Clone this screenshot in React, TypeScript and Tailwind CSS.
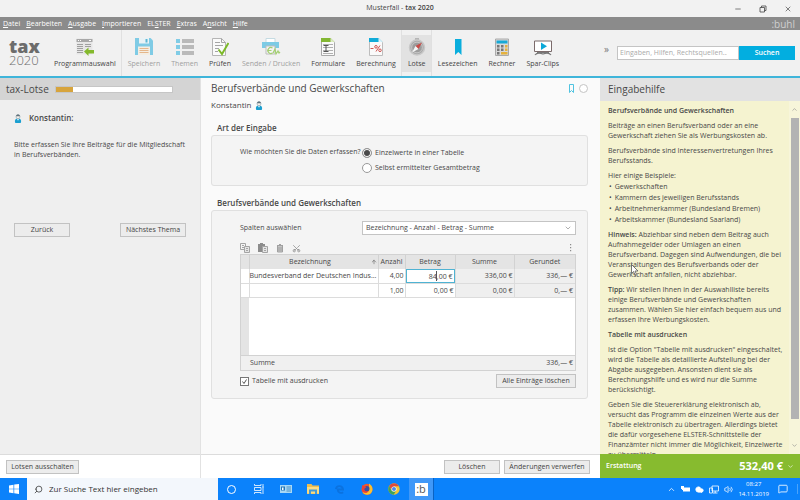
import type { ReactNode } from "react";
import { ArrowUp, ChevronDown, ChevronUp, Cloud, MessageSquare, Minus, Scissors, Search, Volume2, X } from "lucide-react";

const menuItems = [
  ["", "D", "atei"],
  ["", "B", "earbeiten"],
  ["", "A", "usgabe"],
  ["", "I", "mportieren"],
  ["EL", "S", "TER"],
  ["", "E", "xtras"],
  ["A", "n", "sicht"],
  ["", "H", "ilfe"],
];

const rows = [
  { name: "Bundesverband der Deutschen Indus...", count: "4,00", amount: "84,00 €", sum: "336,00 €", rounded: "336,— €", active: true },
  { name: "", count: "1,00", amount: "0,00 €", sum: "0,00 €", rounded: "0,— €", active: false },
];

const examples = [
  "Gewerkschaften",
  "Kammern des jeweiligen Berufsstands",
  "Arbeitnehmerkammer (Bundesland Bremen)",
  "Arbeitskammer (Bundesland Saarland)",
];

function Svg({ children, className = "size-[18px]" }: { children: ReactNode; className?: string }) {
  return (
    <svg viewBox="0 0 18 18" className={className} fill="none" aria-hidden>
      {children}
    </svg>
  );
}

const icons = {
  programs: (
    <Svg>
      <path d="M.5.5h16v16H.5z" fill="#e6e6e6" />
      <path d="M.5 1h16v3H.5z" fill="#a8a8a8" />
      <path d="M2 2.5h1M4 2.5h1M13 2.5h2" stroke="#fff" />
      <path d="M1 6.5h6M1 8.5h6M1 10.5h6M1 12.5h6M1 14.5h6M9 6.5h6M9 8.5h6" stroke="#a0a0a0" />
      <path d="M8 13.5 12.5 9.5V12H18v3.500h-5.500V18z" fill="#84b92c" />
    </Svg>
  ),
  save: (
    <Svg>
      <path d="M0 0h15.500L18 2.500V17H0z" fill="#7fcbe5" />
      <path d="M4 0h10v5.500H4z" fill="#eaf3f6" />
      <path d="M10.500 1h2v3.500h-2z" fill="#5cb6d5" />
      <path d="M3 8.500h12V17H3z" fill="#f4eee4" />
      <path d="M4.500 10.500h9M4.500 12.500h9M4.500 14.500h9" stroke="#e5b78c" />
    </Svg>
  ),
  topics: (
    <Svg>
      <path d="M0 1h4v4H0zM0 7h4v4H0zM0 13h4v4H0z" fill="#80cce6" />
      <path d="M6 1h12v4H6zM6 7h12v4H6zM6 13h12v4H6z" fill="#bababa" />
    </Svg>
  ),
  check: (
    <Svg>
      <path d="M1.500.5h9l4 4v13h-13z" fill="#fafafa" stroke="#b5b5b5" />
      <path d="M10.500.5v4h4M4 4.500h5M4 7.500h8M4 10.500h4M4 13.500h3" stroke="#a5a5a5" />
      <path d="m7.500 11.500 3.500 4.500 6.500-11" stroke="#7cb928" strokeWidth="2" />
    </Svg>
  ),
  send: (
    <Svg className="h-[18px] w-[20px]">
      <path d="M4 .5h9v4H4z" fill="#fff" stroke="#c5dbe2" />
      <path d="M0 4h17v6H0z" fill="#7dcbe5" />
      <path d="M4 8h9v8H4z" fill="#f4f4f4" stroke="#bdbdbd" />
      <path d="M10.500 10a3 3 0 1 0 0 5M5.500 12.500h4M11 15l2-4 1 5 2-3 1 2 1-1" stroke="#a3cf70" strokeWidth="1.200" />
    </Svg>
  ),
  forms: (
    <Svg>
      <path d="M2.500.5h9l4 4v13h-13z" fill="#fafafa" stroke="#a9a9a9" />
      <path d="M2 0h9.500l4 4H2z" fill="#83b733" />
      <path d="M11.500 0v4h4z" fill="#dcebc3" />
      <path d="M4 6.500h10M4 9.500h10M4 12.500h10M4 15.500h10" stroke="#b0b0b0" />
      <path d="M4.500 7.500h5M7 7.500v6M4.500 13.500h5" stroke="#555" />
    </Svg>
  ),
  calc: (
    <Svg>
      <path d="M2.500.5h9l4 4v13h-13z" fill="#fafafa" stroke="#bdbdbd" />
      <path d="M2 0h9.500l4 4H2z" fill="#11abd8" />
      <path d="M11.500 0v4h4z" fill="#dff3f9" />
      <path d="M3.500 10.500H6.500M13 7.500l-4 6" stroke="#d0534f" />
      <circle cx="9" cy="8.800" r="1.300" stroke="#d0534f" />
      <circle cx="13" cy="12.300" r="1.300" stroke="#d0534f" />
    </Svg>
  ),
  compass: (
    <Svg>
      <path d="M7 0h4v3H7z" fill="#b5b5b5" />
      <circle cx="9" cy="9.500" r="7.500" fill="#aaa" stroke="#c8c8c8" strokeWidth="1.500" />
      <circle cx="9" cy="9.500" r="5.300" fill="#9c9c9c" stroke="#dedede" strokeWidth=".6" />
      <path d="m14 4.500-3.500 6.500-3-3z" fill="#c94a45" />
      <path d="m4 14.500 3.500-6.500 3 3z" fill="#f6f6f6" />
    </Svg>
  ),
  bookmark: (
    <Svg>
      <path d="M6 1h6.500v16l-3.200-3L6 17z" fill="#0aaedd" />
    </Svg>
  ),
  calculator: (
    <Svg>
      <path d="M2.500 1h13v16.500h-13z" fill="#d9d9d9" stroke="#aaa" />
      <path d="M3.500 2.500h11v3h-11z" fill="#16a9d6" />
      <path d="M4 7h2.500v2.500H4zM8 7h2.500v2.500H8zM4 10.500h2.500V13H4zM8 10.500h2.500V13H8zM4 14h2.500v2.500H4z" fill="#777" />
      <path d="M12 7h2.500v2.500H12zM12 10.500h2.500V13H12zM8 14h6.500v2.500H8z" fill="#e5b23d" />
    </Svg>
  ),
  clips: (
    <Svg>
      <path d="M.5 3h17v10.500H.5z" fill="#fff" stroke="#7b6b6b" />
      <path d="m7 4.500 6 3.700L7 12z" fill="#0ca8d8" />
      <path d="M1 17c1.500-2 4-2.500 8-1 4-1.500 6.500-1 8 1M3 14.500h12" stroke="#777" strokeWidth="1.200" />
    </Svg>
  ),
};

type ToolProps = { label: string; icon: ReactNode; disabled?: boolean; active?: boolean };

function Tool({ label, icon, disabled, active }: ToolProps) {
  return (
    <button
      type="button"
      disabled={disabled}
      className={`flex h-[37px] flex-col items-center gap-[2px] pt-[3px] pr-[5px] pl-[6px] text-[7px] leading-[12px] whitespace-nowrap ${
        disabled ? "text-[#a0a0a0]" : "text-[#444]"
      } ${active ? "bg-[#e2e2e2]" : ""}`}
    >
      {icon}
      {label}
    </button>
  );
}

function Divider() {
  return <span className="h-[46px] w-px bg-[#e0e0e0]" />;
}

function PushButton({ children, className = "" }: { children: ReactNode; className?: string }) {
  return (
    <button
      type="button"
      className={`h-[14px] border border-[#c2c2c2] bg-[#ececec] text-[7px] leading-[12px] whitespace-nowrap text-[#444] ${className}`}
    >
      {children}
    </button>
  );
}

function Person() {
  return (
    <svg viewBox="0 0 8 10" className="h-[9px] w-[8px]" aria-hidden>
      <path d="M1 10C-.5 6 2 5 4 5s4.500 1 3 5z" fill="#1a9fd0" />
      <circle cx="4" cy="3" r="2.200" fill="#f5f0ea" stroke="#8496a0" strokeWidth=".6" />
      <path d="M1.700 2.500C2 0 6 0 6.300 2.500z" fill="#60727d" />
      <path d="m3 5.500 1 2 1-2z" fill="#fff" />
    </svg>
  );
}

function TitleBar() {
  return (
    <div className="grid h-[17px] shrink-0 grid-cols-[1fr_auto_1fr] items-center bg-[#f2f2f2] text-[7px] text-[#444]">
      <span />
      <h1>
        Musterfall - <span className="font-semibold">tax 2020</span>
      </h1>
      <div className="flex justify-end gap-[17px] pr-[8px]">
        <button type="button" aria-label="Minimieren">
          <Minus className="size-[8px]" />
        </button>
        <button type="button" aria-label="Wiederherstellen">
          <svg viewBox="0 0 8 8" className="size-[8px]" fill="none" stroke="currentColor" strokeWidth=".8" aria-hidden>
            <path d="M1 2.500h4.500V7H1zM2.500 2.500V1H7v4.500H5.500" />
          </svg>
        </button>
        <button type="button" aria-label="Schließen">
          <X className="size-[8px]" />
        </button>
      </div>
    </div>
  );
}

function MenuBar() {
  return (
    <nav className="flex h-[13px] shrink-0 items-center justify-between bg-[#8b8b8b] pr-[5px] pl-[3px] text-white">
      <div className="flex gap-[6px] text-[7px] leading-[12px]">
        {menuItems.map(([before, key, after]) => (
          <button type="button" key={before + key + after}>
            {before}
            <u>{key}</u>
            {after}
          </button>
        ))}
      </div>
      <span className="text-[10px] leading-[12px] text-[#d0d0d0]">:buhl</span>
    </nav>
  );
}

function Toolbar() {
  return (
    <header className="flex h-[48px] shrink-0 items-center border-b-2 border-[#3fb5da] bg-[#f1f1f1] pr-[5px]">
      <div className="flex w-[48px] flex-col pl-[9px] text-[#6c6c6c]">
        <span className="text-[18px] leading-[14px] font-extrabold">tax</span>
        <span className="text-[13px] leading-[14px] font-light">2020</span>
      </div>
      <Tool label="Programmauswahl" icon={icons.programs} />
      <Divider />
      <Tool label="Speichern" icon={icons.save} disabled />
      <Tool label="Themen" icon={icons.topics} disabled />
      <Tool label="Prüfen" icon={icons.check} />
      <Tool label="Senden / Drucken" icon={icons.send} disabled />
      <Tool label="Formulare" icon={icons.forms} />
      <Tool label="Berechnung" icon={icons.calc} />
      <Divider />
      <Tool label="Lotse" icon={icons.compass} active />
      <Divider />
      <Tool label="Lesezeichen" icon={icons.bookmark} />
      <Tool label="Rechner" icon={icons.calculator} />
      <Tool label="Spar-Clips" icon={icons.clips} />
      <button type="button" aria-label="Mehr" className="mb-[8px] ml-auto pr-[8px] text-[10px] text-[#777]">
        »
      </button>
      <form className="flex h-[14px]">
        <input
          type="search"
          aria-label="Suche"
          placeholder="Eingaben, Hilfen, Rechtsquellen..."
          className="w-[122px] border border-[#c4c4c4] bg-white px-[2px] text-[7px] placeholder:text-[#aaa]"
        />
        <button type="button" className="w-[56px] bg-[#02aee0] text-[7px] font-semibold text-white">
          Suchen
        </button>
      </form>
    </header>
  );
}

function Lotse() {
  return (
    <aside className="flex w-[201px] shrink-0 flex-col border-r border-[#e2e2e2] bg-[#efefef]">
      <div className="flex h-[22px] items-center gap-[6px] bg-[#d4d4d4] pl-[6px]">
        <h2 className="text-[10px]">tax-Lotse</h2>
        <div className="h-[7px] w-[118px] border border-[#c6c6c6] bg-white">
          <div className="h-full w-[17px] bg-[#d7a43c]" />
        </div>
      </div>
      <div className="px-[14px] pt-[13px]">
        <p className="flex items-center gap-[7px] text-[8px] leading-[10px] font-semibold">
          <Person />
          Konstantin:
        </p>
        <p className="mt-[17px] text-[7px] leading-[10px]">
          Bitte erfassen Sie Ihre Beiträge für die Mitgliedschaft
          <br />
          in Berufsverbänden.
        </p>
        <div className="mt-[63px] flex justify-between">
          <PushButton className="w-[56px]">Zurück</PushButton>
          <PushButton className="w-[66px]">Nächstes Thema</PushButton>
        </div>
      </div>
      <div className="mt-auto flex h-[24px] items-center border-t border-[#dcdcdc] bg-white pl-[6px]">
        <PushButton className="w-[73px]">Lotsen ausschalten</PushButton>
      </div>
    </aside>
  );
}

function EntryTable() {
  const head = "border-r border-[#d2d2d2] font-normal";
  return (
    <div className="flex h-[117px] flex-col border border-[#d2d2d2] bg-white">
      <table className="w-full table-fixed text-[7px] leading-[12px]">
        <colgroup>
          <col className="w-[8px]" />
          <col />
          <col className="w-[27px]" />
          <col className="w-[50px]" />
          <col className="w-[59px]" />
          <col className="w-[61px]" />
        </colgroup>
        <thead>
          <tr className="h-[14px] bg-[#e4e4e4]">
            <th className={head} />
            <th className={head}>
              <span className="flex items-center justify-end pr-[1px]">
                <span className="flex-1">Bezeichnung</span>
                <ArrowUp className="size-[6px]" />
              </span>
            </th>
            <th className={head}>Anzahl</th>
            <th className={head}>Betrag</th>
            <th className={head}>Summe</th>
            <th className="font-normal">Gerundet</th>
          </tr>
        </thead>
        <tbody>
          {rows.map((row) => (
            <tr key={row.count} className="h-[14px] border-b border-[#dcdcdc] text-right">
              <td className="border-r border-[#dcdcdc]" />
              <td className="border-r border-[#dcdcdc] text-left whitespace-nowrap">{row.name}</td>
              <td className="border-r border-[#dcdcdc] pr-[1px]">{row.count}</td>
              <td className="border-r border-[#dcdcdc]">
                {row.active ? (
                  <span className="relative block">
                    <input
                      aria-label="Betrag"
                      defaultValue={row.amount}
                      className="block h-[14px] w-full border border-[#4fb3d3] pr-[1px] text-right"
                    />
                    <span className="absolute top-[2px] right-[18px] h-[10px] w-px bg-[#555]" />
                  </span>
                ) : (
                  <span className="pr-[1px]">{row.amount}</span>
                )}
              </td>
              <td className="border-r border-[#dcdcdc] bg-[#efefef] pr-[1px]">{row.sum}</td>
              <td className="bg-[#efefef] pr-[2px]">{row.rounded}</td>
            </tr>
          ))}
        </tbody>
      </table>
      <div className="w-[8px] flex-1 bg-[#e4e4e4]" />
      <div className="flex h-[15px] items-center justify-between border-t border-[#d2d2d2] bg-[#f0f0f0] pr-[2px] pl-[9px] text-[7px]">
        <span>Summe</span>
        <span>336,— €</span>
      </div>
    </div>
  );
}

function TableTools() {
  return (
    <div className="flex h-[12px] items-center gap-[8px] text-[#8c8c8c]">
      <button type="button" aria-label="Kopieren">
        <svg viewBox="0 0 10 10" className="size-[10px]" fill="none" stroke="#a4a4a4" aria-hidden>
          <path d="M.5.5h5v6h-5zM2 2.500h2M2 4.500h2" />
          <path d="M4.500 3.500h5v6h-5z" fill="#e4e4e4" />
          <path d="M6 5.500h2M6 7.500h2" />
        </svg>
      </button>
      <button type="button" aria-label="Einfügen">
        <svg viewBox="0 0 10 10" className="size-[10px]" aria-hidden>
          <path d="M0 1h2V0h3v1h2v8H0z" fill="#8c8c8c" />
          <path d="M4.500 3.500h5v6h-5z" fill="#e4e4e4" stroke="#a4a4a4" />
          <path d="M6 5.500h2M6 7.500h2" stroke="#a4a4a4" />
        </svg>
      </button>
      <button type="button" aria-label="Löschen">
        <svg viewBox="0 0 8 10" className="h-[10px] w-[8px]" fill="none" stroke="#a0a0a0" aria-hidden>
          <path d="M1 2.500h6M3 1.500h2M1.500 2.500v6.500h5V2.500" fill="#c4c4c4" />
          <path d="M3 4v4M5 4v4" />
        </svg>
      </button>
      <button type="button" aria-label="Ausschneiden">
        <Scissors className="size-[9px] -rotate-90" />
      </button>
      <button type="button" aria-label="Mehr" className="mr-[4px] ml-auto">
        <svg viewBox="0 0 2 8" className="h-[8px] w-[2px]" fill="currentColor" aria-hidden>
          <path d="M0 0h1.200v1.200H0zM0 3h1.200v1.200H0zM0 6h1.200v1.200H0z" />
        </svg>
      </button>
    </div>
  );
}

function Editor() {
  const radio =
    "size-[10px] appearance-none rounded-full border border-[#999] bg-white checked:bg-[#4a4a4a] checked:shadow-[inset_0_0_0_1px_white]";
  return (
    <main className="flex min-w-0 flex-1 flex-col bg-[#fafafa]">
      <div className="flex-1 pt-[4px] pr-[12px] pl-[10px]">
        <div className="flex items-center justify-between">
          <h2 className="text-[10px] leading-[13px]">Berufsverbände und Gewerkschaften</h2>
          <div className="flex items-center gap-[5px]">
            <svg viewBox="0 0 5 9" className="h-[9px] w-[5px]" fill="none" stroke="#4fc3e0" aria-hidden>
              <path d="M.5.5h4v8L2.500 6.500l-2 2z" />
            </svg>
            <span className="size-[9px] rounded-full border border-[#c4c4c4] bg-white" />
          </div>
        </div>
        <p className="mt-[5px] flex items-center gap-[4px] text-[8px] leading-[10px]">
          Konstantin
          <Person />
        </p>

        <h3 className="mt-[13px] pl-[6px] text-[8px] leading-[10px] font-semibold">Art der Eingabe</h3>
        <fieldset className="mt-[2px] flex h-[51px] rounded-[3px] border border-[#e0e0e0] bg-[#f4f4f4] pt-[11px] pl-[28px] text-[7px] leading-[10px]">
          <span id="mode" className="w-[122px] whitespace-nowrap">
            Wie möchten Sie die Daten erfassen?
          </span>
          <div role="radiogroup" aria-labelledby="mode" className="flex flex-col gap-[5px] pt-[1px]">
            <label className="flex items-center gap-[3px]">
              <input type="radio" name="mode" defaultChecked className={radio} />
              Einzelwerte in einer Tabelle
            </label>
            <label className="flex items-center gap-[3px]">
              <input type="radio" name="mode" className={radio} />
              Selbst ermittelter Gesamtbetrag
            </label>
          </div>
        </fieldset>

        <h3 className="mt-[12px] pl-[6px] text-[8px] leading-[10px] font-semibold">Berufsverbände und Gewerkschaften</h3>
        <section className="mt-[2px] rounded-[3px] border border-[#e0e0e0] bg-[#f4f4f4] pt-[10px] pr-[11px] pb-[10px] pl-[28px]">
          <div className="flex items-center text-[7px]">
            <label htmlFor="columns" className="w-[122px]">
              Spalten auswählen
            </label>
            <div className="relative flex-1">
              <select id="columns" className="block h-[14px] w-full appearance-none border border-[#c4c4c4] bg-white pl-[3px] leading-[12px]">
                <option>Bezeichnung - Anzahl - Betrag - Summe</option>
              </select>
              <ChevronDown className="pointer-events-none absolute top-[3px] right-[4px] size-[8px] text-[#888]" />
            </div>
          </div>
          <div className="mt-[7px]">
            <TableTools />
          </div>
          <EntryTable />
          <div className="mt-[3px] flex items-center justify-between">
            <label className="relative flex items-center gap-[3px] text-[7px]">
              <input type="checkbox" defaultChecked className="peer size-[9px] appearance-none border border-[#777] bg-white" />
              <svg viewBox="0 0 9 9" className="absolute left-0 hidden size-[9px] peer-checked:block" fill="none" stroke="#555" aria-hidden>
                <path d="M2.500 4.500 4 6.500l2.500-4" />
              </svg>
              Tabelle mit ausdrucken
            </label>
            <PushButton className="w-[80px]">Alle Einträge löschen</PushButton>
          </div>
        </section>
      </div>
      <div className="flex h-[24px] items-center justify-end gap-[4px] border-t border-[#dcdcdc] bg-white pr-[10px]">
        <PushButton className="w-[56px]">Löschen</PushButton>
        <PushButton className="w-[86px]">Änderungen verwerfen</PushButton>
      </div>
    </main>
  );
}

function Help() {
  return (
    <aside className="flex w-[200px] shrink-0 flex-col bg-[#f5f3d0]">
      <h2 className="flex h-[23px] shrink-0 items-center bg-[#e2e2e2] pl-[8px] text-[10px]">Eingabehilfe</h2>
      <div className="relative flex min-h-0 flex-1">
        <div className="flex flex-1 flex-col gap-[5px] overflow-hidden pt-[5px] pl-[8px] text-[7px] leading-[10px] whitespace-nowrap">
          <h3 className="font-semibold">Berufsverbände und Gewerkschaften</h3>
          <p>
            Beiträge an einen Berufsverband oder an eine
            <br />
            Gewerkschaft ziehen Sie als Werbungskosten ab.
          </p>
          <p>
            Berufsverbände sind Interessenvertretungen Ihres
            <br />
            Berufsstands.
          </p>
          <div>
            <p>Hier einige Beispiele:</p>
            <ul className="leading-[11px]">
              {examples.map((item) => (
                <li key={item} className="flex gap-[3px] pl-[1px]">
                  <span>•</span>
                  {item}
                </li>
              ))}
            </ul>
          </div>
          <p>
            <b className="font-semibold">Hinweis:</b> Abziehbar sind neben dem Beitrag auch
            <br />
            Aufnahmegelder oder Umlagen an einen
            <br />
            Berufsverband. Dagegen sind Aufwendungen, die bei
            <br />
            Veranstaltungen des Berufsverbands oder der
            <br />
            Gewerkschaft anfallen, nicht abziehbar.
          </p>
          <p>
            <b className="font-semibold">Tipp:</b> Wir stellen Ihnen in der Auswahlliste bereits
            <br />
            einige Berufsverbände und Gewerkschaften
            <br />
            zusammen. Wählen Sie hier einfach bequem aus und
            <br />
            erfassen Ihre Werbungskosten.
          </p>
          <h3 className="font-semibold">Tabelle mit ausdrucken</h3>
          <p>
            Ist die Option "Tabelle mit ausdrucken" eingeschaltet,
            <br />
            wird die Tabelle als detaillierte Aufstellung bei der
            <br />
            Abgabe ausgegeben. Ansonsten dient sie als
            <br />
            Berechnungshilfe und es wird nur die Summe
            <br />
            berücksichtigt.
          </p>
          <p>
            Geben Sie die Steuererklärung elektronisch ab,
            <br />
            versucht das Programm die einzelnen Werte aus der
            <br />
            Tabelle elektronisch zu übertragen. Allerdings bietet
            <br />
            die dafür vorgesehene ELSTER-Schnittstelle der
            <br />
            Finanzämter nicht immer die Möglichkeit, Einzelwerte
            <br />
            zu übermitteln.
          </p>
        </div>
        <div className="flex w-[11px] flex-col items-center bg-[#f7f5da] pt-[5px] pb-[5px] text-[#888]">
          <ChevronUp className="size-[7px] shrink-0" />
          <div className="mt-[5px] mb-[23px] w-[8px] flex-1 bg-[#b3b3b3]" />
          <ChevronDown className="size-[7px] shrink-0" />
        </div>
        <svg viewBox="0 0 8 12" className="absolute top-[163px] left-[31px] h-[12px] w-[8px]" fill="#fff" stroke="#555" strokeWidth=".8" aria-hidden>
          <path d="M.5.5v9l2-2 1.500 3.500 1.500-.7L4 7h3z" />
        </svg>
      </div>
      <button type="button" className="flex h-[24px] shrink-0 items-center bg-[#87bb2f] px-[6px] text-white">
        <span className="text-[7px] font-semibold">Erstattung</span>
        <span className="mr-[4px] ml-auto text-[11px] font-bold">532,40 €</span>
        <ChevronDown className="size-[7px]" />
      </button>
    </aside>
  );
}

function Taskbar() {
  const app = "flex h-full w-[27px] items-center justify-center";
  return (
    <footer className="flex h-[22px] shrink-0 items-center bg-[#0b82fb] text-white">
      <button type="button" aria-label="Start" className={app}>
        <svg viewBox="0 0 10 10" className="size-[10px]" fill="#fff" aria-hidden>
          <path d="M0 1.400 4.500.7v4H0zM5.200.6 10 0v4.700H5.200zM0 5.300h4.500v4L0 8.600zM5.200 5.300H10V10l-4.800-.7z" />
        </svg>
      </button>
      <label className="flex h-full w-[191px] items-center gap-[6px] bg-[#f3f7fc] pl-[7px] text-[#333]">
        <Search className="size-[9px] -scale-x-100" />
        <input
          aria-label="Suche"
          placeholder="Zur Suche Text hier eingeben"
          className="min-w-0 flex-1 text-[8px] placeholder:text-[#333]"
        />
      </label>
      <button type="button" aria-label="Cortana" className={app}>
        <span className="size-[9px] rounded-full border border-white" />
      </button>
      <button type="button" aria-label="Aufgabenansicht" className={app}>
        <svg viewBox="0 0 10 10" className="size-[10px]" fill="none" stroke="#fff" strokeWidth=".8" aria-hidden>
          <path d="M.5 0v1.500H7V0M.5 3.500H7v3H.5zM.5 10V8.500H7V10M9 0v10M8.500 3h1" />
        </svg>
      </button>
      <button type="button" aria-label="Kontakte" className={app}>
        <svg viewBox="0 0 12 8" className="h-[8px] w-[12px]" aria-hidden>
          <path d="M0 0h12v8H0z" fill="#a9d8f5" />
          <path d="M1 1.500h4v4H1z" fill="#2377b8" />
          <path d="M2 2.500h1.500V5H2z" fill="#fff" />
          <path d="M6.500 2H11M6.500 4H11M6.500 6H11" stroke="#4b91c4" />
        </svg>
      </button>
      <button type="button" aria-label="Explorer" className={app}>
        <svg viewBox="0 0 12 10" className="h-[10px] w-[12px]" aria-hidden>
          <path d="M0 0h4.500l1 1.500H12V10H0z" fill="#edbd4e" />
          <path d="M0 3h12v6.500H0z" fill="#fadb83" />
          <path d="M2 5.500h8V10H8V7.500H4V10H2z" fill="#4199d8" />
        </svg>
      </button>
      <button type="button" aria-label="Edge" className={app}>
        <svg viewBox="0 0 10 10" className="size-[9px]" fill="none" stroke="#0a72e0" strokeWidth="2" aria-hidden>
          <path d="M1 4.500C1.500 0 8.500 0 9 5H3c0 4 4 4.500 6 3" />
        </svg>
      </button>
      <button type="button" aria-label="Firefox" className={app}>
        <svg viewBox="0 0 12 12" className="size-[12px]" aria-hidden>
          <circle cx="6" cy="6.300" r="5.500" fill="#f0562c" />
          <path d="M8 .5c3.500 2 4.500 6 2.500 9C8 13 3 12 1.500 9c3 2 7 0 6.500-3.500z" fill="#fbc02f" />
          <circle cx="5.800" cy="5.800" r="2.700" fill="#3a4fa3" />
          <path d="M1 2c1 1.500 3 1 4.500 2L3 6c.5 2.500 3 3 4.500 2-1 3-6 2-6.500-1.500z" fill="#ee4035" />
        </svg>
      </button>
      <button type="button" aria-label="Chrome" className={app}>
        <svg viewBox="0 0 12 12" className="size-[12px]" aria-hidden>
          <circle cx="6" cy="6" r="5.700" fill="#f3c534" />
          <path d="M1.100 3.100A5.700 5.700 0 0 1 11 3.300H6L3.600 7.400z" fill="#dc4b3e" />
          <path d="M1.100 3.100 3.600 7.400 6 8.700l2-.6-2.300 3.600A5.700 5.700 0 0 1 1.100 3.100z" fill="#3fa35b" />
          <circle cx="6" cy="6" r="2.600" fill="#fff" />
          <circle cx="6" cy="6" r="2" fill="#4a87e8" />
        </svg>
      </button>
      <button type="button" className="ml-[2px] flex h-full w-[25px] items-center justify-center border-r border-[#0a62c4] bg-[#4098f8]">
        <span className="flex h-[13px] w-[13px] items-center justify-center bg-white text-[11px] leading-[12px] text-[#555]">:b</span>
      </button>
      <div className="ml-auto flex h-full items-center gap-[5px] pr-[2px]">
        <ChevronUp className="size-[9px]" />
        <svg viewBox="0 0 9 8" className="h-[8px] w-[9px]" aria-hidden>
          <path d="M2 2.500h7v4H2z" fill="#fff" />
          <path d="M0 1h3v3H2v1H1V4H0z" fill="#fff" />
        </svg>
        <Cloud className="size-[9px]" fill="#fff" />
        <svg viewBox="0 0 10 9" className="h-[9px] w-[10px]" fill="none" stroke="#fff" strokeWidth=".8" aria-hidden>
          <path d="M3 1h6.500v5H3zM4 8h4.500M6.200 6v2M.5 3h3v5h-3z" />
        </svg>
        <Volume2 className="size-[9px]" />
        <div className="text-center text-[6px] leading-[10px]">
          <p>08:27</p>
          <p>14.11.2019</p>
        </div>
        <button type="button" aria-label="Benachrichtigungen" className="ml-[4px] border-r border-[#4ba3fa] pr-[9px]">
          <MessageSquare className="size-[10px]" />
        </button>
      </div>
    </footer>
  );
}

export default function App() {
  return (
    <div className="flex h-screen flex-col overflow-hidden font-['Open_Sans','Noto_Sans',sans-serif] text-[#484848]">
      <TitleBar />
      <MenuBar />
      <Toolbar />
      <div className="flex min-h-0 flex-1">
        <Lotse />
        <Editor />
        <Help />
      </div>
      <Taskbar />
    </div>
  );
}
